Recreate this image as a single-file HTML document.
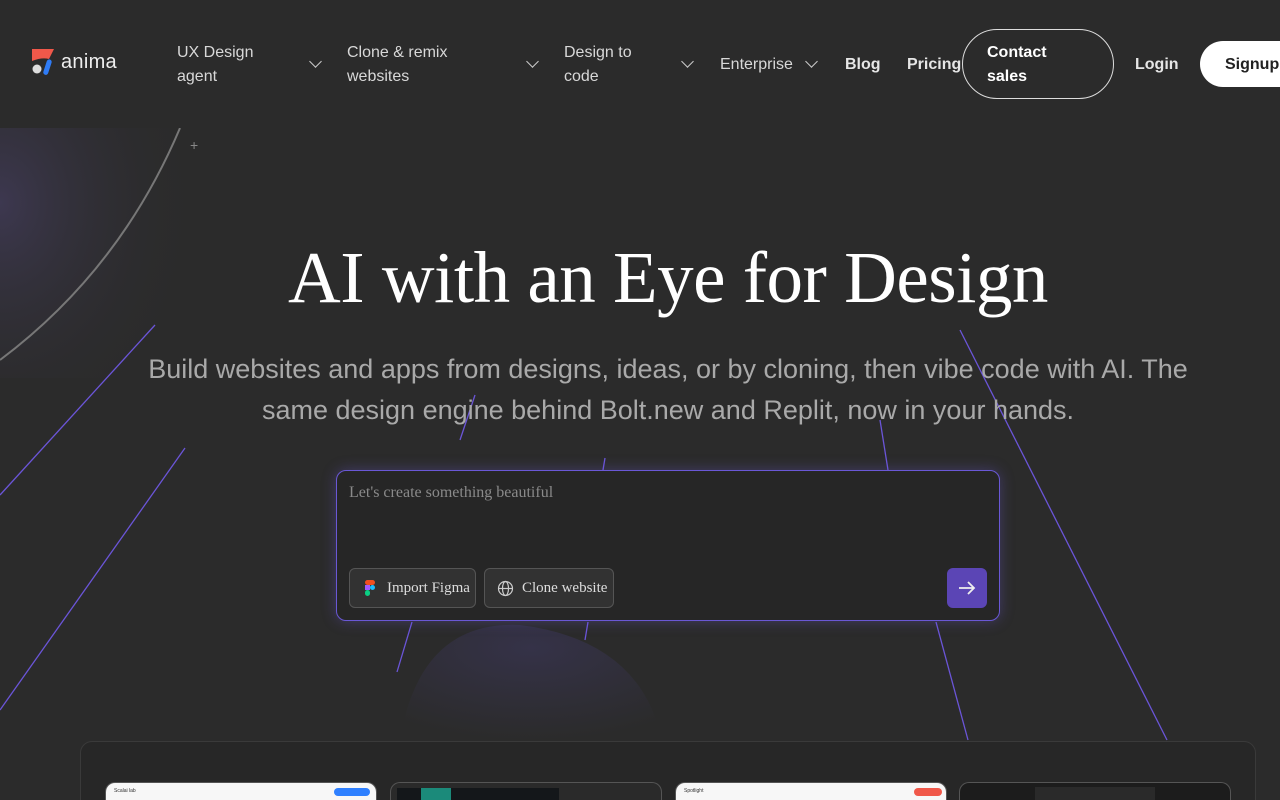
<!DOCTYPE html>
<html><head><meta charset="utf-8"><style>
*{margin:0;padding:0;box-sizing:border-box}
html,body{width:1280px;height:800px;overflow:hidden}
body{background:#2b2b2b;font-family:"Liberation Sans",sans-serif;color:#ddd;position:relative}
.nav{position:absolute;top:0;left:0;width:1280px;height:128px;background:#2b2b2b}
.ni{position:absolute;font-size:16px;line-height:24px;color:#d8d8d8}
.chev{position:absolute;width:9px;height:9px;border-right:1.5px solid #ccc;border-bottom:1.5px solid #ccc;transform:rotate(45deg)}
.b{font-weight:bold;color:#e6e6e6}
h1{position:absolute;top:236px;left:28px;width:1280px;text-align:center;font-family:"Liberation Serif",serif;font-weight:normal;font-size:73px;color:#fff;letter-spacing:-0.5px}
.sub{position:absolute;top:349px;left:28px;width:1280px;text-align:center;font-size:27px;line-height:41px;color:#a9a9a9}
.box{position:absolute;left:336px;top:470px;width:664px;height:151px;border:1.5px solid #6a58d6;border-radius:10px;background:#262626;box-shadow:0 0 14px rgba(110,90,220,.35)}
.ph{position:absolute;left:12px;top:13px;font-family:"Liberation Serif",serif;font-size:16px;color:#8a8a8a}
.btn{position:absolute;top:97px;height:40px;border:1px solid #555;border-radius:6px;background:#323232;font-family:"Liberation Serif",serif;font-size:15px;color:#ddd;line-height:38px}
.go{position:absolute;left:610px;top:97px;width:40px;height:40px;border-radius:6px;background:#5b45b5}
.panel{position:absolute;left:80px;top:741px;width:1176px;height:80px;border:1px solid #3a3a3a;border-radius:12px;background:#272727}
.card{position:absolute;top:782px;width:272px;height:18px;border-radius:10px 10px 0 0;border:1px solid #555;border-bottom:none;overflow:hidden}
</style></head><body>
<svg style="position:absolute;left:0;top:0" width="1280" height="800">
<defs><radialGradient id="g" cx="0" cy="0.3" r="1"><stop offset="0" stop-color="#3d3850"/><stop offset="1" stop-color="#2b2b2b" stop-opacity="0"/></radialGradient>
<radialGradient id="s" cx="0.5" cy="0.2" r="0.8"><stop offset="0" stop-color="#353248"/><stop offset="1" stop-color="#2b2b2b"/></radialGradient></defs>
<rect x="0" y="128" width="200" height="250" fill="url(#g)"/>
<path d="M400 740 Q420 620 520 625 Q640 640 662 740 Z" fill="url(#s)"/>
<path d="M0 360 Q120 270 180 128" stroke="#777" stroke-width="2" fill="none"/>
<g stroke="#6b55d8" stroke-width="1.3" fill="none">
<line x1="0" y1="495" x2="155" y2="325"/>
<line x1="0" y1="710" x2="185" y2="448"/>
<line x1="397" y1="672" x2="412" y2="622"/>
<line x1="585" y1="640" x2="588" y2="622"/>
<line x1="460" y1="440" x2="475" y2="395"/>
<line x1="605" y1="458" x2="603" y2="470"/>
<line x1="880" y1="420" x2="888" y2="470"/>
<line x1="936" y1="622" x2="968" y2="740"/>
<line x1="960" y1="330" x2="1167" y2="740"/>
</g>
<text x="190" y="150" fill="#888" font-size="14" font-family="Liberation Sans">+</text>
</svg>
<div class="nav">
<svg style="position:absolute;left:32px;top:49px" width="24" height="26"><path d="M0 0H22L17 10Q10 8 0 12Z" fill="#f0584a"/><circle cx="5" cy="20" r="4.5" fill="#ddd"/><rect x="13" y="10" width="5" height="16" rx="2.5" transform="rotate(18 15 18)" fill="#2f7cf6"/></svg>
<div class="ni" style="left:61px;top:50px;font-size:20px;color:#eee;letter-spacing:.3px">anima</div>
<div class="ni" style="left:177px;top:41px">UX Design<br>agent</div><div class="chev" style="left:311px;top:57px"></div>
<div class="ni" style="left:347px;top:41px">Clone &amp; remix<br>websites</div><div class="chev" style="left:528px;top:57px"></div>
<div class="ni" style="left:564px;top:41px">Design to<br>code</div><div class="chev" style="left:683px;top:57px"></div>
<div class="ni" style="left:720px;top:53px">Enterprise</div><div class="chev" style="left:807px;top:57px"></div>
<div class="ni b" style="left:845px;top:53px">Blog</div>
<div class="ni b" style="left:907px;top:53px">Pricing</div>
<div style="position:absolute;left:962px;top:29px;width:152px;height:70px;border:1.5px solid #ddd;border-radius:35px"></div>
<div class="ni b" style="left:987px;top:41px;color:#fff">Contact<br>sales</div>
<div class="ni b" style="left:1135px;top:53px">Login</div>
<div style="position:absolute;left:1200px;top:41px;width:120px;height:46px;background:#fff;border-radius:23px"></div>
<div class="ni b" style="left:1225px;top:53px;color:#222">Signup</div>
</div>
<h1>AI with an Eye for Design</h1>
<div class="sub">Build websites and apps from designs, ideas, or by cloning, then vibe code with AI. The<br>same design engine behind Bolt.new and Replit, now in your hands.</div>
<div class="box">
<div class="ph">Let's create something beautiful</div>
<div class="btn" style="left:12px;width:127px"><svg style="position:absolute;left:15px;top:11px" width="10" height="16"><rect x="0" y="0" width="10" height="5" rx="2.5" fill="#f24e1e"/><rect x="0" y="5" width="5" height="5" fill="#a259ff"/><circle cx="7.5" cy="7.5" r="2.5" fill="#1abcfe"/><rect x="0" y="10" width="5" height="6" rx="2.5" fill="#0acf83"/></svg><span style="position:absolute;left:37px">Import Figma</span></div>
<div class="btn" style="left:147px;width:130px"><svg style="position:absolute;left:12px;top:11px" width="17" height="17" fill="none" stroke="#ccc" stroke-width="1.2"><circle cx="8.5" cy="8.5" r="7"/><ellipse cx="8.5" cy="8.5" rx="3" ry="7"/><line x1="1.5" y1="8.5" x2="15.5" y2="8.5"/></svg><span style="position:absolute;left:37px">Clone website</span></div>
<div class="go"><svg style="position:absolute;left:11px;top:12px" width="18" height="16" fill="none" stroke="#eee" stroke-width="1.8"><path d="M1 8H16M10 2L16 8L10 14"/></svg></div>
</div>
<div class="panel"></div>
<div class="card" style="left:105px;background:#f7f7f7"><div style="position:absolute;left:228px;top:5px;width:36px;height:8px;border-radius:4px;background:#2f80ff"></div><div style="position:absolute;left:8px;top:5px;font-size:5px;color:#333">Scalai lab</div></div>
<div class="card" style="left:390px;background:#2a2a2a"><div style="position:absolute;left:6px;top:5px;width:162px;height:40px;background:#14171a"></div><div style="position:absolute;left:30px;top:5px;width:30px;height:20px;background:#1b8a7a"></div></div>
<div class="card" style="left:675px;background:#f7f7f7"><div style="position:absolute;left:238px;top:5px;width:28px;height:8px;border-radius:4px;background:#f0584a"></div><div style="position:absolute;left:8px;top:5px;font-size:5px;color:#333">Spotlight</div></div>
<div class="card" style="left:959px;background:#1c1c1c"><div style="position:absolute;left:75px;top:4px;width:120px;height:20px;background:#2a2a2a"></div></div>
</body></html>
